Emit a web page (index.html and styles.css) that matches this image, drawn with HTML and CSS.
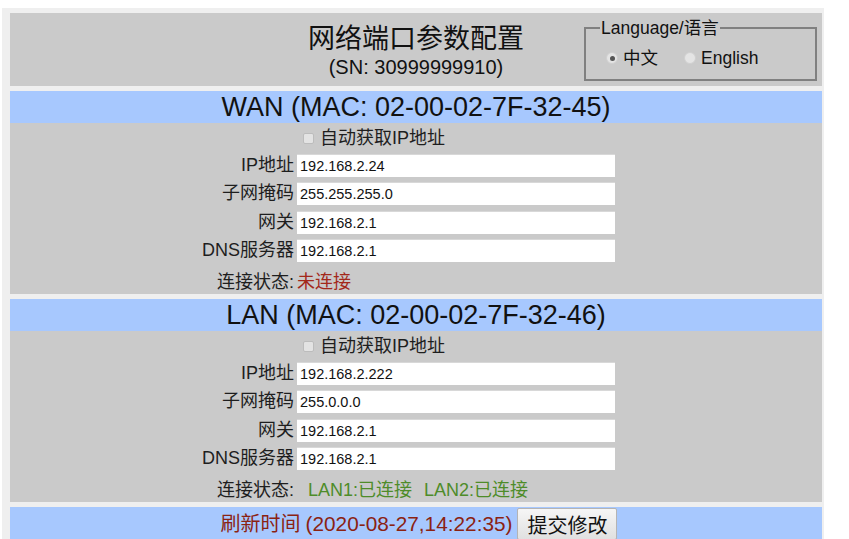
FILE: index.html
```html
<!DOCTYPE html>
<html lang="zh-CN">
<head>
<meta charset="utf-8">
<title>网络端口参数配置</title>
<link rel="stylesheet" href="styles.css">
</head>
<body>
<div class="page">
  <header class="head">
    <div class="title">网络端口参数配置</div>
    <div class="sn">(SN: 30999999910)</div>
    <div class="lang">
      <span class="legend">Language/语言</span>
      <label class="opt"><input type="radio" name="lang" class="radio" checked><span>中文</span></label>
      <label class="opt opt-en"><input type="radio" name="lang" class="radio"><span>English</span></label>
    </div>
  </header>

  <section class="sec">
    <div class="bar">WAN (MAC: 02-00-02-7F-32-45)</div>
    <div class="form">
      <div class="lbl"></div>
      <label class="chk"><input type="checkbox" class="box"><span>自动获取IP地址</span></label>
      <div class="lbl">IP地址</div><input class="fld" value="192.168.2.24">
      <div class="lbl">子网掩码</div><input class="fld" value="255.255.255.0">
      <div class="lbl">网关</div><input class="fld" value="192.168.2.1">
      <div class="lbl">DNS服务器</div><input class="fld" value="192.168.2.1">
      <div class="lbl st">连接状态:</div><div class="val st red">未连接</div>
    </div>
  </section>

  <section class="sec">
    <div class="bar">LAN (MAC: 02-00-02-7F-32-46)</div>
    <div class="form">
      <div class="lbl"></div>
      <label class="chk"><input type="checkbox" class="box"><span>自动获取IP地址</span></label>
      <div class="lbl">IP地址</div><input class="fld" value="192.168.2.222">
      <div class="lbl">子网掩码</div><input class="fld" value="255.0.0.0">
      <div class="lbl">网关</div><input class="fld" value="192.168.2.1">
      <div class="lbl">DNS服务器</div><input class="fld" value="192.168.2.1">
      <div class="lbl st">连接状态:</div><div class="val st green"><span class="lan1">LAN1:已连接</span><span class="lan2">LAN2:已连接</span></div>
    </div>
  </section>

  <footer class="foot">
    <span class="time"><span class="tcjk">刷新时间</span><span class="tnum">(2020-08-27,14:22:35)</span></span>
    <button class="btn">提交修改</button>
  </footer>
</div>
</body>
</html>
```

FILE: styles.css
```css
html, body {
  margin: 0;
  padding: 0;
  background: #fff;
  overflow: hidden;
}
body {
  font-family: "Liberation Sans", Arial, "Noto Sans CJK SC", sans-serif;
  color: #1a1a1a;
}
.page {
  margin: 8px 0 0 2px;
  width: 812px;
  padding: 5px 2px 0 8px;
  background: #efefef;
  display: flex;
  flex-direction: column;
  gap: 5px;
}
.head {
  position: relative;
  height: 73px;
  box-sizing: border-box;
  padding-top: 10px;
  background: #cacaca;
  text-align: center;
}
.title {
  font-size: 27px;
  line-height: 32px;
  color: #111;
}
.sn {
  font-size: 20px;
  line-height: 24px;
  color: #111;
}
.lang {
  position: absolute;
  left: 574px;
  top: 14px;
  width: 209px;
  height: 50px;
  border: 2px solid #808080;
  display: flex;
  align-items: center;
  padding-left: 20px;
  box-sizing: content-box;
  text-align: left;
}
.legend {
  position: absolute;
  left: 14px;
  top: -11px;
  padding: 0 1px;
  background: #cacaca;
  font-size: 17.5px;
  line-height: 20px;
  color: #111;
}
.opt {
  display: flex;
  align-items: center;
  font-size: 17.5px;
  line-height: 22px;
  margin-top: 8px;
  color: #111;
}
.opt-en {
  margin-left: 26px;
}
.radio {
  appearance: none;
  -webkit-appearance: none;
  flex: 0 0 12px;
  width: 12px;
  height: 12px;
  margin: 0 5px 0 0;
  border-radius: 50%;
  background: #e4e4e4;
  border: 1px solid #d0d0d0;
  box-sizing: border-box;
  position: relative;
}
.radio:checked::after {
  content: "";
  position: absolute;
  left: 2.5px;
  top: 2.5px;
  width: 5px;
  height: 5px;
  border-radius: 50%;
  background: #555;
}
.bar {
  height: 32px;
  line-height: 32px;
  background: #a7c8fe;
  text-align: center;
  font-size: 27px;
  color: #111;
}
.form {
  display: grid;
  grid-template-columns: 284px 318px;
  grid-template-rows: 20px;
  grid-auto-rows: 23px;
  column-gap: 3px;
  row-gap: 5.5px;
  padding-top: 5px;
  height: 171px;
  box-sizing: border-box;
  background: #cacaca;
  align-content: start;
}
.lbl {
  text-align: right;
  font-size: 18px;
  line-height: 23px;
  color: #1e1e1e;
}
.chk {
  display: flex;
  align-items: center;
  font-size: 18px;
  line-height: 20px;
  color: #1e1e1e;
}
.box {
  appearance: none;
  -webkit-appearance: none;
  flex: 0 0 11px;
  width: 11px;
  height: 11px;
  margin: 0 6px 0 6px;
  background: #e3e3e3;
  border: 1px solid #bcbcbc;
  border-radius: 2px;
  box-sizing: border-box;
}
.fld {
  width: 318px;
  height: 23px;
  box-sizing: border-box;
  border: none;
  border-top: 1px solid #d8d8d8;
  background: #fff;
  padding: 0 3px;
  font-family: "Liberation Sans", Arial, sans-serif;
  font-size: 14.5px;
  color: #111;
  outline: none;
}
.val {
  font-size: 18px;
  line-height: 23px;
}
.st {
  padding-top: 3px;
}
.red {
  color: #a3281a;
}
.green {
  color: #4e8c29;
}
.lan1 {
  margin-left: 11px;
}
.lan2 {
  margin-left: 12px;
}
.foot {
  height: 34px;
  background: #a7c8fe;
  display: flex;
  justify-content: center;
  align-items: flex-start;
  padding-left: 6px;
}
.time {
  color: #8b2212;
  font-size: 20px;
  line-height: 34px;
  margin-right: 5px;
}
.tnum {
  font-size: 20.8px;
  margin-left: 5px;
}
.btn {
  height: 32px;
  margin-top: 1px;
  padding: 0 9px;
  font-family: "Liberation Sans", "Noto Sans CJK SC", sans-serif;
  font-size: 20px;
  color: #111;
  background: linear-gradient(#f6f6f6, #e0e0e0);
  border: 1px solid #b4b4b4;
  border-radius: 2px;
}
```
